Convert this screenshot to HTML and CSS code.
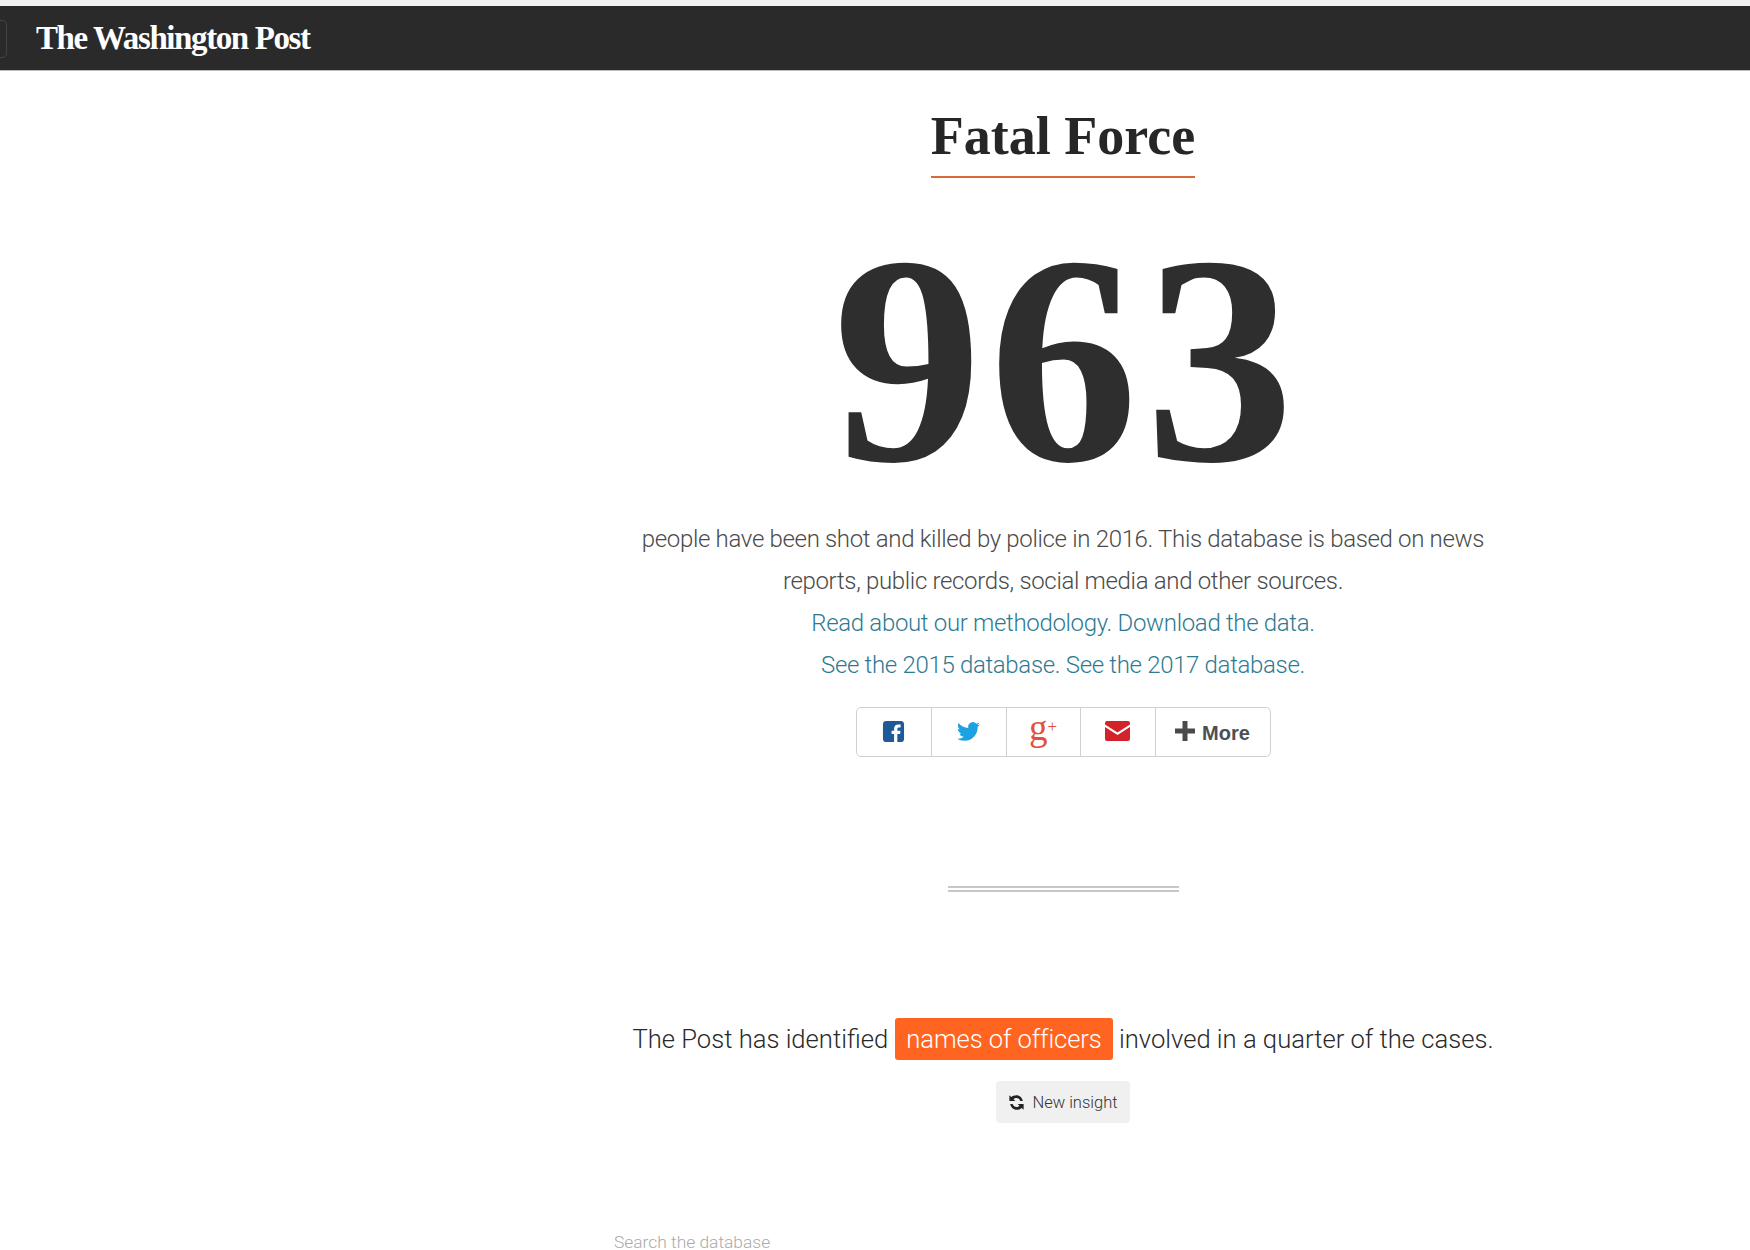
FILE: index.html
```html
<!DOCTYPE html>
<html lang="en">
<head>
  <meta charset="UTF-8">
  <title>Fatal Force - The Washington Post</title>
  <link rel="stylesheet" href="styles.css">
</head>
<body>
  <!-- Top bar -->
  <header class="top-bar">
    <span class="menu-edge"></span>
    <a class="logo" href="#">The Washington Post</a>
  </header>

  <main class="page">
    <h1 class="title">Fatal Force</h1>
    <div class="big-number">963</div>

    <div class="intro">
      <p>people have been shot and killed by police in 2016. This database is based on news</p>
      <p>reports, public records, social media and other sources.</p>
      <p><a href="#">Read about our methodology.</a> <a href="#">Download the data.</a></p>
      <p><a href="#">See the 2015 database.</a> <a href="#">See the 2017 database.</a></p>
    </div>

    <!-- Share buttons -->
    <div class="share">
      <a class="share-item" href="#" aria-label="Facebook">
        <svg class="icon" viewBox="0 0 24 24" width="23" height="23"><path fill="#1e5a96" fill-rule="evenodd" d="M4.500 1h15A3.500 3.500 0 0 1 23 4.500v15a3.500 3.500 0 0 1-3.500 3.500H16v-8.500h2.900l.4-3.400H16V9.500c0-1 .3-1.600 1.700-1.600h1.700V4.800c-.3 0-1.300-.1-2.500-.1-2.500 0-4.300 1.500-4.300 4.400v2H10v3.400h2.600V23H4.500A3.500 3.500 0 0 1 1 19.500v-15A3.500 3.500 0 0 1 4.500 1z"/></svg>
      </a>
      <a class="share-item" href="#" aria-label="Twitter">
        <svg class="icon" viewBox="0 0 24 24" width="23" height="23"><path fill="#1da1e2" d="M23.953 4.570a10 10 0 0 1-2.825.775 4.958 4.958 0 0 0 2.163-2.723c-.951.555-2.005.959-3.127 1.184a4.920 4.920 0 0 0-8.384 4.482C7.690 8.095 4.067 6.130 1.640 3.162a4.822 4.822 0 0 0-.666 2.475c0 1.710.870 3.213 2.188 4.096a4.904 4.904 0 0 1-2.228-.616v.060a4.923 4.923 0 0 0 3.946 4.827 4.996 4.996 0 0 1-2.212.085 4.936 4.936 0 0 0 4.604 3.417 9.867 9.867 0 0 1-6.102 2.105c-.390 0-.779-.023-1.170-.067a13.995 13.995 0 0 0 7.557 2.209c9.053 0 13.998-7.496 13.998-13.985 0-.210 0-.420-.015-.630A9.935 9.935 0 0 0 24 4.590z"/></svg>
      </a>
      <a class="share-item gplus" href="#" aria-label="Google Plus">g<span class="gplus-mark">+</span></a>
      <a class="share-item" href="#" aria-label="Email">
        <svg class="icon" viewBox="0 0 25 20" width="25" height="20"><path fill="#d3222a" d="M2 0h21a2 2 0 0 1 2 2v1.500l-12.500 8L0 3.500V2a2 2 0 0 1 2-2zM0 6l12.500 8L25 6v12a2 2 0 0 1-2 2H2a2 2 0 0 1-2-2z"/></svg>
      </a>
      <a class="share-item share-more" href="#">
        <svg class="icon" viewBox="0 0 20 20" width="20" height="20"><path fill="#4a4a4a" d="M7.500 0h5v7.500H20v5h-7.500V20h-5v-7.500H0v-5h7.500z"/></svg>
        <span>More</span>
      </a>
    </div>

    <div class="double-rule"></div>

    <p class="insight">The Post has identified <span class="tag">names of officers</span> involved in a quarter of the cases.</p>

    <button class="insight-button">
      <svg class="icon" viewBox="0 0 16 16" width="17" height="17"><path fill="#222" d="M13.900 6.500h-2.300C11 4.700 9.600 3.700 8 3.700c-1.100 0-2.100.5-2.800 1.300l1.700 1.700H1.300V1.100l1.800 1.800C4.300 1.800 6 1.100 8 1.100c2.900 0 5.400 2.200 5.900 5.400zM2.100 9.500h2.300c.6 1.800 2 2.800 3.600 2.800 1.100 0 2.100-.5 2.800-1.300L9.100 9.300h5.600v5.600l-1.800-1.800c-1.200 1.100-2.900 1.800-4.900 1.800-2.900 0-5.400-2.200-5.900-5.400z"/></svg>
      New insight
    </button>

    <div class="search-row">
      <span class="search-label">Search the database</span>
    </div>
  </main>
</body>
</html>
```

FILE: styles.css
```css
/* Global Style */
html, body {
  height: 100%;
}

body {
  margin: 0;
  height: 1250px;
  overflow: hidden;
  background: #fff;
  color: #2a2a2a;
  font-family: 'Roboto', 'Liberation Sans', sans-serif;
}

a {
  text-decoration: none;
}

/* Top bar */
.top-bar {
  display: flex;
  align-items: center;
  height: 64px;
  border-top: 6px solid #f1f1f1;
  border-bottom: 1px solid #bbb;
  background: #2a2a2b;
}

.menu-edge {
  width: 7px;
  height: 38px;
  margin-top: 2px;
  border: 1px solid #444;
  border-left: none;
  border-radius: 0 5px 5px 0;
  box-sizing: border-box;
}

.logo {
  margin-left: 29px;
  color: #fff;
  font-family: 'Liberation Serif', serif;
  font-size: 33px;
  font-weight: bold;
  letter-spacing: -1.4px;
  white-space: nowrap;
}

/* Main column */
.page {
  display: flex;
  flex-direction: column;
  align-items: center;
  padding-left: 376px;
}

.title {
  margin: 31px 0 0;
  padding-bottom: 6px;
  border-bottom: 2px solid #d9693a;
  font-family: 'Liberation Serif', serif;
  font-size: 54px;
  font-weight: bold;
  line-height: 68px;
  color: #262626;
  white-space: nowrap;
}

.big-number {
  margin-top: 36px;
  padding-left: 8px;
  font-family: 'Liberation Serif', serif;
  font-size: 298px;
  font-weight: bold;
  line-height: 290px;
  letter-spacing: 7px;
  color: #2e2e2e;
}

/* Intro text */
.intro {
  margin-top: 14px;
  text-align: center;
  font-size: 24px;
  font-weight: 300;
  line-height: 42px;
  letter-spacing: -0.33px;
  color: #4a4a4a;
  white-space: nowrap;
}

.intro p {
  margin: 0;
}

.intro a {
  color: #2f7a92;
}

/* Share buttons */
.share {
  display: flex;
  margin-top: 21px;
  height: 50px;
  box-sizing: border-box;
  border: 1px solid #d0d0d0;
  border-radius: 5px;
}

.share-item {
  display: flex;
  align-items: center;
  justify-content: center;
  width: 74px;
  border-right: 1px solid #d0d0d0;
}

.share-item:last-child {
  border-right: none;
}

.share-item .icon {
  margin-bottom: 2px;
}

.gplus {
  font-family: 'Liberation Serif', serif;
  font-size: 37px;
  line-height: 1;
  padding-bottom: 10px;
  box-sizing: border-box;
  color: #e2503f;
}

.gplus-mark {
  font-size: 17px;
  margin-top: -2px;
}

.share-more {
  width: 114px;
  gap: 7px;
  font-family: 'Liberation Sans', sans-serif;
  font-size: 20px;
  font-weight: bold;
  color: #4d4f53;
}

.share-more span {
  padding-top: 2px;
}

/* Double rule */
.double-rule {
  width: 231px;
  height: 2px;
  margin-top: 129px;
  border-top: 2px solid #c8c8c8;
  border-bottom: 2px solid #c8c8c8;
}

/* Insight */
.insight {
  margin: 126px 0 0;
  font-size: 25.6px;
  font-weight: 300;
  line-height: 42px;
  color: #2a2a2a;
  white-space: nowrap;
}

.tag {
  display: inline-block;
  margin: 0 0 0 1px;
  padding: 0 11px;
  border-radius: 3px;
  background: #ff6421;
  color: #fff;
  letter-spacing: -0.1px;
}

.insight-button {
  display: flex;
  align-items: center;
  gap: 7px;
  height: 42px;
  margin-top: 21px;
  padding: 0 12px;
  border: none;
  border-radius: 4px;
  background: #f0f0f0;
  color: #333;
  font-family: 'Roboto', sans-serif;
  font-size: 16.5px;
  font-weight: 300;
}

/* Search */
.search-row {
  width: 900px;
  margin-top: 109px;
}

.search-label {
  margin-left: 1px;
  font-size: 17.4px;
  font-weight: 300;
  color: #aaa;
}
```
